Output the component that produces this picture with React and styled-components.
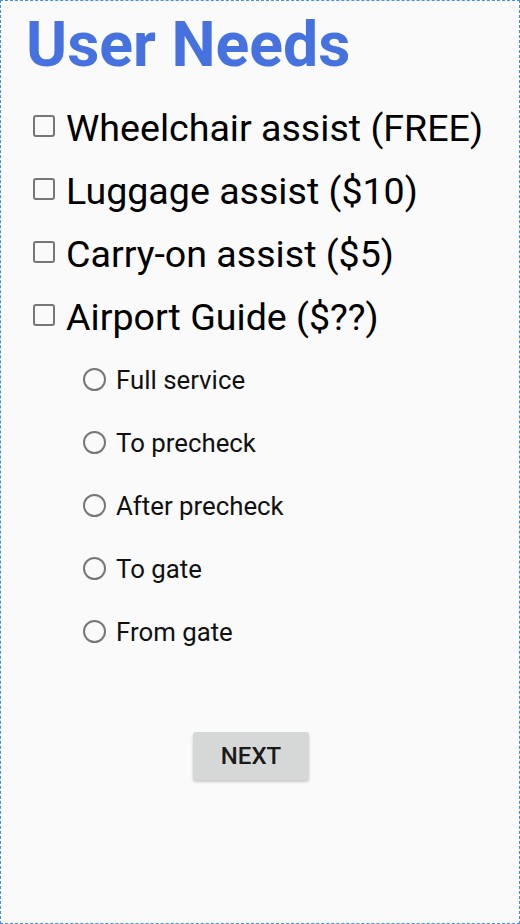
import React from 'react';
import styled, { createGlobalStyle } from 'styled-components';

const GlobalStyle = createGlobalStyle`
  html, body {
    margin: 0;
    padding: 0;
    background: #fafafa;
  }
  body {
    font-family: Roboto, "Noto Sans", sans-serif;
  }
`;

const needs = [
  'Wheelchair assist (FREE)',
  'Luggage assist ($10)',
  'Carry-on assist ($5)',
  'Airport Guide ($??)',
];

const guideOptions = ['Full service', 'To precheck', 'After precheck', 'To gate', 'From gate'];

const App = () => {
  return (
    <>
      <GlobalStyle />
      <Screen>
        <Title>User Needs</Title>
        <NeedList>
          {needs.map((n) => (
            <NeedRow key={n}>
              <Box />
              <NeedLabel>{n}</NeedLabel>
            </NeedRow>
          ))}
        </NeedList>
        <RadioList>
          {guideOptions.map((o) => (
            <RadioRow key={o}>
              <Circle />
              <RadioLabel>{o}</RadioLabel>
            </RadioRow>
          ))}
        </RadioList>
        <Footer>
          <NextButton>NEXT</NextButton>
        </Footer>
      </Screen>
    </>
  );
};

export default App;

const Screen = styled.div`
  box-sizing: border-box;
  width: 520px;
  height: 924px;
  border: 1px dashed #3d8fe8;
  background: #fafafa;
  padding: 8px 0 0 25px;
  display: flex;
  flex-direction: column;
`;

const Title = styled.h1`
  margin: 0;
  font-size: 62.5px;
  font-weight: 700;
  color: #4672e0;
  line-height: 72px;
`;

const NeedList = styled.div`
  display: flex;
  flex-direction: column;
  margin-top: 15px;
`;

const NeedRow = styled.div`
  display: flex;
  align-items: center;
  height: 63px;
  padding-left: 7px;
`;

const Box = styled.span`
  box-sizing: border-box;
  flex: none;
  width: 22px;
  height: 22px;
  border: 2px solid #767676;
  border-radius: 3px;
  margin-right: 11px;
  margin-top: -3px;
`;

const NeedLabel = styled.span`
  font-size: 37.6px;
  line-height: 44px;
  color: #000;
`;

const RadioList = styled.div`
  display: flex;
  flex-direction: column;
  padding-left: 57px;
`;

const RadioRow = styled.div`
  display: flex;
  align-items: center;
  height: 63px;
`;

const Circle = styled.span`
  box-sizing: border-box;
  flex: none;
  width: 23px;
  height: 23px;
  border: 2px solid #777;
  border-radius: 50%;
  margin-right: 10px;
`;

const RadioLabel = styled.span`
  font-size: 25.8px;
  line-height: 30px;
  color: #111;
`;

const Footer = styled.div`
  display: flex;
  justify-content: center;
  padding-top: 69px;
  padding-right: 43px;
`;

const NextButton = styled.button`
  width: 116px;
  height: 48px;
  border: none;
  border-radius: 3px;
  background: #d6d7d7;
  box-shadow: 0 2px 3px rgba(0, 0, 0, 0.2);
  font-family: Roboto, sans-serif;
  font-size: 24px;
  font-weight: 500;
  color: #1a1a1a;
`;
